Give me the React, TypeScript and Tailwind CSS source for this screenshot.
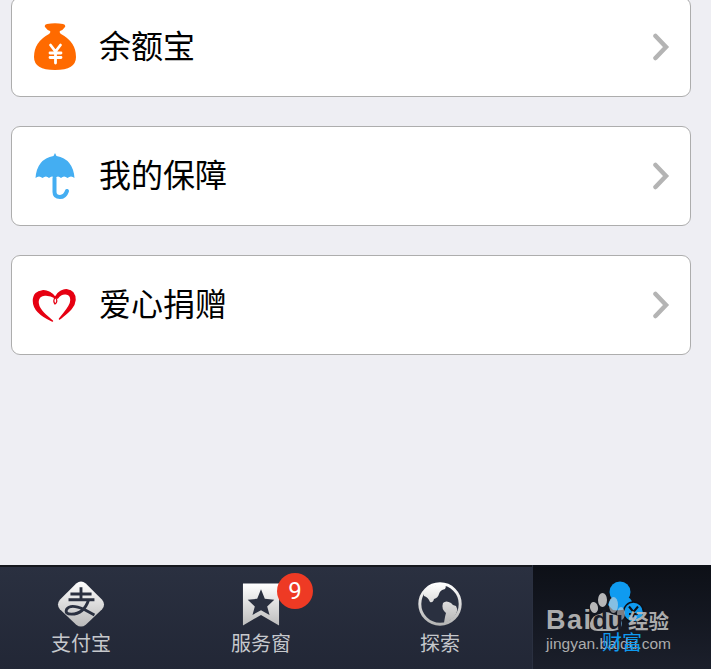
import React from "react";

const cjk = { fontFamily: '"Noto Sans CJK SC", "Noto Sans", sans-serif' };
const arial = { fontFamily: '"Liberation Sans", sans-serif' };

function Chevron() {
  return (
    <svg width="18" height="28" viewBox="0 0 18 28" className="shrink-0">
      <path d="M3.5 3 L14 14 L3.5 25" fill="none" stroke="#b4b4b4" strokeWidth="4.500" strokeLinecap="round" strokeLinejoin="miter" />
    </svg>
  );
}

function Bag() {
  return (
    <svg width="44" height="48" viewBox="0 0 44 48">
      <path d="M14 1 Q22 -0.500 30 1 Q33 1.500 32 4 Q30 7 27 8 Q26 9.500 28 11 Q43 19 43 34 Q43 47 22 47 Q1 47 1 34 Q1 19 16 11 Q18 9.500 17 8 Q14 7 12 4 Q11 1.500 14 1 Z" fill="#ff6a00" />
      <path d="M17.500 22 L22.500 28.500 L27.500 22 M17 30 H28 M17 34.500 H28 M22.500 28.500 V40" stroke="#fff" strokeWidth="2.800" fill="none" strokeLinecap="round" />
    </svg>
  );
}

function Umbrella() {
  return (
    <svg width="40" height="46" viewBox="0 0 40 46">
      <path d="M20 0 L21.500 3 Q38 6 39.500 25 Q36 22 32.500 25 Q29 22 26 25 Q23 22 20 25 Q17 22 14 25 Q11 22 7.500 25 Q4 22 .5 25 Q2 6 18.500 3 Z" fill="#44aef2" />
      <path d="M19.500 25 V39 Q19.500 44 25 44 Q30 44 32 38" fill="none" stroke="#44aef2" strokeWidth="4" strokeLinecap="round" />
    </svg>
  );
}

function Heart() {
  return (
    <svg width="46" height="36" viewBox="1.500 0 46 36">
      <path d="M25 11 C19 1 3 1 3 14 C3 23 13 30 22 34 C16 29 6.500 22 7.500 14 C8.500 6 19 7 25 11 Z" fill="#e60012" stroke="#e60012" strokeWidth="1.500" strokeLinejoin="round" />
      <path d="M25 10 C30 0 45 0 44.500 13 C44 21 36 26 29 32 C33 26 40.500 20 40.500 13 C40.500 5 31 5 27 11 Z" fill="#e60012" stroke="#e60012" strokeWidth="1.500" strokeLinejoin="round" />
      <path d="M25 9 Q22 14 24.500 17 Q27.500 15 25.500 11" fill="none" stroke="#e60012" strokeWidth="1.200" />
    </svg>
  );
}

function Card({ icon, label, className }: { icon: React.ReactNode; label: string; className: string }) {
  return (
    <div className={`mx-[11px] flex h-[100px] w-[680px] items-center rounded-[9px] border border-[#adadad] bg-white pr-[20px] ${className}`}>
      <div className="flex w-[87px] shrink-0 items-center justify-center pr-[1px]">{icon}</div>
      <div className="flex-1 pb-[6px] text-[32px] font-normal leading-none text-black" style={cjk}>{label}</div>
      <Chevron />
    </div>
  );
}

function Tab({ icon, label, className }: { icon: React.ReactNode; label: string; className: string }) {
  return (
    <div className={`flex flex-col items-center pt-[12px] ${className}`}>
      <div className="flex h-[50px] items-center justify-center">{icon}</div>
      <div className="text-[20px] leading-[28px] text-[#c6c8cc]" style={cjk}>{label}</div>
    </div>
  );
}

export default function App() {
  return (
    <div className="relative flex h-[669px] w-[711px] flex-col overflow-hidden bg-[#eeeef3]">
      <div className="flex-1">
        <Card className="-mt-[3px]" icon={<Bag />} label="余额宝" />
        <Card className="mt-[29px]" icon={<Umbrella />} label="我的保障" />
        <Card className="mt-[29px]" icon={<Heart />} label="爱心捐赠" />
      </div>
      <div className="flex h-[104px] bg-[#23293a]">
        <div className="flex h-full w-[532px] border-t-2 border-t-[#16181e] bg-gradient-to-b from-[#2a3040] to-[#222736]">
          <Tab
            className="w-[162px]"
            label="支付宝"
            icon={
              <svg width="48" height="49" viewBox="0 0 50 50">
                <defs>
                  <linearGradient id="g1" x1="0" y1="0" x2="0" y2="1">
                    <stop offset="0" stopColor="#ffffff" />
                    <stop offset="1" stopColor="#b9b9b9" />
                  </linearGradient>
                </defs>
                <path d="M20 3 Q25 -1 30 3 L47 20 Q51 25 47 30 L30 46 Q25 50 20 46 L3 30 Q-1 25 3 20 Z" fill="url(#g1)" />
                <path d="M14 14 H36 M25 7 V20 M12 20 H39 M33 20 Q28 35 15 35 Q8 35 10 30 Q14 24 28 30 L39 36" fill="none" stroke="#2a3040" strokeWidth="3" />
              </svg>
            }
          />
          <Tab
            className="w-[198px]"
            label="服务窗"
            icon={
              <svg width="38" height="43" viewBox="0 0 40 44">
                <defs>
                  <linearGradient id="g2" x1="0" y1="0" x2="0" y2="1">
                    <stop offset="0" stopColor="#ffffff" />
                    <stop offset="1" stopColor="#bdbdbd" />
                  </linearGradient>
                </defs>
                <path d="M1 0 H39 V44 L20 33 L1 44 Z" fill="url(#g2)" />
                <path d="M20 6 L24 16 L34 17 L26.500 24 L29 33 L20 28 L11 33 L13.500 24 L6 17 L16 16 Z" fill="#2a3040" />
              </svg>
            }
          />
          <Tab
            className="w-[160px]"
            label="探索"
            icon={
              <svg width="44" height="44" viewBox="0 0 44 44">
                <defs>
                  <linearGradient id="g3" x1="0" y1="0" x2="0" y2="1">
                    <stop offset="0" stopColor="#ffffff" />
                    <stop offset="1" stopColor="#b5b5b5" />
                  </linearGradient>
                </defs>
                <circle cx="22" cy="22" r="20.200" fill="#2a3040" stroke="url(#g3)" strokeWidth="3" />
                <path d="M6 10 Q13 2 26 2 Q29 4 27 7 Q22 8 21 12 Q20 16 16 17 Q15 21 12 20 Q10 15 6 14 Z M25 21 Q28 18 33 21 Q35 24 38 24 Q41 29 36 35 Q31 40 26 41 Q27 34 28 31 Q23 27 25 21 Z" fill="url(#g3)" />
              </svg>
            }
          />
        </div>
        <div className="flex h-full flex-1 flex-col items-center border-l border-[#2a3040] bg-gradient-to-b from-[#0d1017] to-[#1b1f2b] pt-[16px]">
          <div className="flex h-[48px] items-start justify-center pl-[8px]">
            <svg width="38" height="44" viewBox="0 0 38 44">
              <circle cx="13" cy="11" r="10.500" fill="#0f9bf0" />
              <path d="M1 24 Q3 17 7 16 H21 Q26 19 26 26 Q18 30 6 29 Z" fill="#0f9bf0" />
              <circle cx="26.500" cy="31" r="10" fill="#0f9bf0" stroke="#0d1017" strokeWidth="1.500" />
              <path d="M22 25.500 L26.500 31 L31 25.500 M26.500 31 V38 M22 33 H31" fill="none" stroke="#0d1017" strokeWidth="2" />
            </svg>
          </div>
          <div className="relative z-10 -mt-[1px] text-[20px] leading-[28px] text-[#0f9bf0]" style={cjk}>财富</div>
        </div>
      </div>

      {/* notification badge */}
      <div className="absolute left-[277px] top-[573px] flex h-[36px] w-[36px] items-center justify-center rounded-full bg-[#ee3a24] text-[24px] leading-none text-white" style={{ fontFamily: '"Roboto", sans-serif' }}>9</div>

      {/* watermark */}
      <div className="pointer-events-none absolute left-[546px] top-[608px] w-[165px] opacity-90">
        <svg className="absolute left-[40px] top-[-18px]" width="42" height="46" viewBox="0 0 42 46">
          <ellipse cx="8" cy="17.500" rx="4" ry="5.500" fill="#c8c8c8" transform="rotate(-12 8 17.500)" />
          <ellipse cx="16.500" cy="10" rx="4.500" ry="7" fill="#c8c8c8" />
          <ellipse cx="27.500" cy="15" rx="4.500" ry="8" fill="#d8d8d8" opacity="0.650" />
          <ellipse cx="35" cy="23.500" rx="4" ry="6.500" fill="#d8d8d8" opacity="0.600" />
          <path d="M4 33 Q6 25 14 24 Q20 20 26 24 Q35 25 36 33 Q36 41 24 41 H14 Q3 42 4 33 Z" fill="#bcbcbc" />
        </svg>
        <div className="relative flex h-[24px] items-end">
          <span className="text-[27px] font-bold leading-[24px] tracking-[1.500px] text-[#bcbcbc]" style={arial}>Bai</span>
          <span className="text-[25px] font-bold leading-[24px] text-[#1a1e2a]" style={arial}>du</span>
          <span className="ml-[5px] text-[20.500px] font-bold leading-[24px] text-[#bcbcbc]" style={cjk}>经验</span>
        </div>
        <div className="relative mt-[2px] text-[15.500px] leading-[20px] text-[#bcbcbc]" style={arial}>jingyan.baidu.com</div>
      </div>
    </div>
  );
}
